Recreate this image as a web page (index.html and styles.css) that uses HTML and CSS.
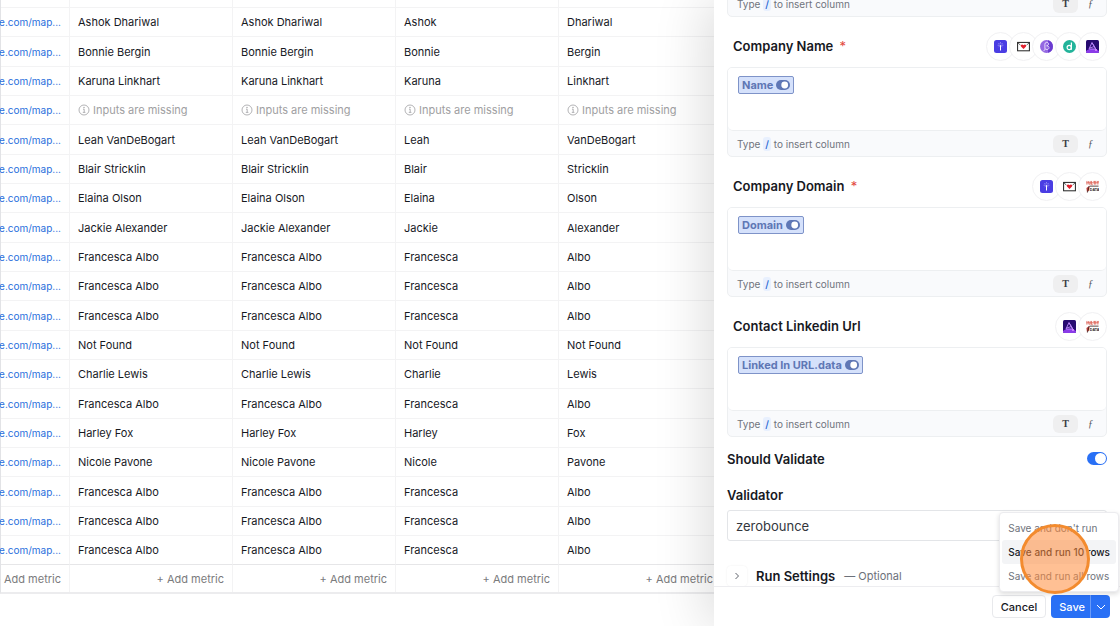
FILE: index.html
```
<!DOCTYPE html>
<html lang="en">
  <head>
    <meta charset="utf-8">
    <title>Column settings</title>
    <link rel="stylesheet" href="styles.css">
  </head>
  <body>
    <svg class="sprite" aria-hidden="true">
      <symbol id="info" viewBox="0 0 12 12">
        <circle cx="6" cy="6" r="5" fill="none" stroke="currentColor" stroke-width="0.8"/>
        <path d="M5 5.2h1.2v3M4.8 8.4h2.6" fill="none" stroke="currentColor" stroke-width="0.8"/>
        <circle cx="6" cy="3.5" r="0.7" fill="currentColor"/>
      </symbol>
      <symbol id="pill" viewBox="0 0 14 10">
        <rect width="14" height="10" rx="5" fill="#5f77b5"/>
        <circle cx="8.7" cy="5" r="3.4" fill="#fff"/>
      </symbol>
      <symbol id="spark" viewBox="0 0 13 13">
        <rect width="13" height="13" rx="2.5" fill="#4a3de3"/>
        <path d="M6.5 5v5.500" stroke="#fff" stroke-width="1"/>
        <path d="M3.600 5.200h5.800M4.400 3l1 1M8.600 3l-1 1M6.500 2v1.600M4.600 7.200l.9-1M8.400 7.200l-.9-1" stroke="#b9b4ff" stroke-width="0.6"/>
      </symbol>
      <symbol id="mail" viewBox="0 0 13 13">
        <rect x="0.6" y="2.4" width="11.8" height="8.400" fill="#fff" stroke="#222" stroke-width="1"/>
        <path d="M1 3l2.400 2M12 3L9.600 5" stroke="#222" stroke-width="0.7"/>
        <path d="M6.500 9L4 6.400C3.200 4.800 5.400 3.800 6.500 5.300c1.100-1.500 3.300-.5 2.500 1.100z" fill="#e0202d"/>
      </symbol>
      <symbol id="beta" viewBox="0 0 13 13">
        <circle cx="6.500" cy="6.500" r="6.500" fill="#9468e2"/>
        <path d="M8 .2a6.500 6.500 0 0 1 0 12.600z" fill="#6a3bd0"/>
        <path d="M3.500 10.700c1 0 1.400-.7 1.400-2V4.300c0-2.800 3.700-2.500 3.700-.4 0 1.200-.9 1.800-1.900 1.900 3.100 0 3 3.700.2 3.700-.8 0-1.300-.3-1.700-.8" fill="none" stroke="#f1e8ff" stroke-width="0.9"/>
      </symbol>
      <symbol id="dropc" viewBox="0 0 13 13">
        <circle cx="6.500" cy="6.500" r="6.500" fill="#22b39a"/>
        <circle cx="6.200" cy="7.500" r="2.100" fill="none" stroke="#fff" stroke-width="1.200"/>
        <path d="M8.400 2.400v7.400" stroke="#fff" stroke-width="1.200"/>
      </symbol>
      <symbol id="nebula" viewBox="0 0 13 13">
        <rect width="13" height="13" rx="1.500" fill="#260a70"/>
        <path d="M0 11c3-3 10-3 13 0v.5a1.500 1.500 0 0 1-1.500 1.500h-10A1.500 1.500 0 0 1 0 11.500z" fill="#8a3be8"/>
        <path d="M6 2.500l-3 6.500h6.500zM6 3l2.500 3.500M3.500 8l5-1.500 1.500 3" fill="none" stroke="#c08aff" stroke-width="0.900"/>
        <circle cx="10" cy="10" r="1.100" fill="#dc8cff"/>
      </symbol>
      <symbol id="sickdata" viewBox="0 0 14 14">
        <path d="M1 1v4M2.500 1.200l1 4M4.500 1v4M6 1v4h1.200M8 1.500h2M9 1.500V5M10.500 1v4M12 1l.8 2L13.500 1M12.800 3v2M.5 3h13" fill="none" stroke="#dd6157" stroke-width="0.900"/>
        <path d="M.5 8.500l3-2v4.500l-2.500 2z" fill="#b83b37"/>
        <path d="M3.500 6.500l-2 7M4 6.600h9.500" stroke="#3a2020" stroke-width="0.900"/>
        <text x="4" y="11.500" class="data-mark">DATA</text>
      </symbol>
    </svg>

    <div class="app">
      <main class="sheet">
        <table class="grid">
          <tbody id="rows"></tbody>
          <tfoot><tr id="metrics"></tr></tfoot>
        </table>
      </main>

      <aside class="panel">
        <form class="panel-body">
          <section class="field">
            <div class="editor">
              <div class="editor-text" role="textbox" aria-label="Input"></div>
              <div class="editor-bar">
                <span>Type <kbd>/</kbd> to insert column</span>
                <button type="button" class="mode active">T</button>
                <button type="button" class="mode fx">ƒ</button>
              </div>
            </div>
          </section>

          <section class="field">
            <header class="field-head">
              <h3 id="company-name">Company Name <span class="required">*</span></h3>
              <div class="sources">
                <span><svg><use href="#spark"/></svg></span>
                <span><svg><use href="#mail"/></svg></span>
                <span><svg><use href="#beta"/></svg></span>
                <span><svg><use href="#dropc"/></svg></span>
                <span><svg><use href="#nebula"/></svg></span>
              </div>
            </header>
            <div class="editor">
              <div class="editor-text" role="textbox" aria-labelledby="company-name"><span class="chip">Name <svg><use href="#pill"/></svg></span></div>
              <div class="editor-bar">
                <span>Type <kbd>/</kbd> to insert column</span>
                <button type="button" class="mode active">T</button>
                <button type="button" class="mode fx">ƒ</button>
              </div>
            </div>
          </section>

          <section class="field">
            <header class="field-head">
              <h3 id="company-domain">Company Domain <span class="required">*</span></h3>
              <div class="sources">
                <span><svg><use href="#spark"/></svg></span>
                <span><svg><use href="#mail"/></svg></span>
                <span><svg><use href="#sickdata"/></svg></span>
              </div>
            </header>
            <div class="editor">
              <div class="editor-text" role="textbox" aria-labelledby="company-domain"><span class="chip">Domain <svg><use href="#pill"/></svg></span></div>
              <div class="editor-bar">
                <span>Type <kbd>/</kbd> to insert column</span>
                <button type="button" class="mode active">T</button>
                <button type="button" class="mode fx">ƒ</button>
              </div>
            </div>
          </section>

          <section class="field">
            <header class="field-head">
              <h3 id="linkedin-url">Contact Linkedin Url</h3>
              <div class="sources">
                <span><svg><use href="#nebula"/></svg></span>
                <span><svg><use href="#sickdata"/></svg></span>
              </div>
            </header>
            <div class="editor">
              <div class="editor-text" role="textbox" aria-labelledby="linkedin-url"><span class="chip">Linked In URL.data <svg><use href="#pill"/></svg></span></div>
              <div class="editor-bar">
                <span>Type <kbd>/</kbd> to insert column</span>
                <button type="button" class="mode active">T</button>
                <button type="button" class="mode fx">ƒ</button>
              </div>
            </div>
          </section>

          <div class="validate">
            <label for="should-validate">Should Validate</label>
            <input type="checkbox" id="should-validate" class="switch" checked>
          </div>

          <label class="select-label" for="validator">Validator</label>
          <select id="validator" class="select">
            <option>zerobounce</option>
          </select>

          <div class="run-settings">
            <button type="button" class="expand" aria-label="Expand run settings">
              <svg viewBox="0 0 8 8"><path d="M2.500 1l3 3-3 3"/></svg>
            </button>
            <h3>Run Settings</h3>
            <span>— Optional</span>
          </div>
        </form>

        <footer class="panel-footer">
          <button type="button" class="cancel">Cancel</button>
          <div class="save-group">
            <button type="button" class="save">Save</button>
            <button type="button" class="save-more" aria-label="More save options">
              <svg viewBox="0 0 10 10"><path d="M1 3l4 4 4-4"/></svg>
            </button>
            <div class="menu">
              <button type="button">Save and don't run</button>
              <button type="button" class="current">Save and run 10 rows</button>
              <button type="button">Save and run all rows</button>
              <span class="click-mark"></span>
            </div>
          </div>
        </footer>
      </aside>
    </div>

    <script src="script.js"></script>
  </body>
</html>
```
FILE: styles.css
```
* {
  box-sizing: border-box;
}
body {
  margin: 0;
  font-family: Inter, "Liberation Sans", sans-serif;
  color: #17191f;
  background-color: #ffffff;
}
button {
  font-family: inherit;
  padding: 0;
  border: 0;
  background: none;
}
h3 {
  margin: 0;
  font-size: 13px;
  font-weight: 600;
}
.sprite {
  display: none;
}
.app {
  display: flex;
  height: 100vh;
  overflow: hidden;
}

/* sheet */
.sheet {
  flex: 1;
  min-width: 0;
  display: flex;
  flex-direction: column;
  justify-content: flex-end;
  padding-bottom: 32px;
  overflow: hidden;
}
.grid {
  width: 722px;
  table-layout: fixed;
  border-collapse: separate;
  border-spacing: 0;
  border-left: 1px solid #e2e3e6;
  border-bottom: 2px solid #ececee;
  font-size: 11px;
}
.grid td {
  height: 29px;
  width: 163px;
  padding: 0 8px;
  border-right: 1px solid #f3f3f4;
  border-bottom: 1px solid #f3f3f4;
  white-space: nowrap;
}
.grid tr:nth-child(3n) td {
  height: 30px;
}
.grid tr:last-child td {
  border-bottom-color: #e6e6e8;
}
.grid td:first-child {
  width: 69px;
  padding-left: 0;
}
.grid a {
  display: flex;
  justify-content: flex-end;
  font-size: 10px;
  color: #2a6fdc;
  text-decoration: none;
}
.grid tfoot td {
  height: 27px;
  border-bottom: 0;
}
.metric {
  display: flex;
  justify-content: flex-end;
  width: 100%;
  font-size: 11px;
  color: #7b7b7d;
}
.missing {
  display: flex;
  align-items: center;
  gap: 3px;
  color: #a0a0a2;
}
.missing svg {
  width: 12px;
  height: 12px;
}

/* panel */
.panel {
  position: relative;
  width: 406px;
  display: flex;
  flex-direction: column;
  background-color: #ffffff;
  box-shadow: -8px 0 50px rgba(0, 0, 0, 0.14);
}
.panel-body {
  flex: 1;
  min-height: 0;
  display: flex;
  flex-direction: column;
  justify-content: flex-end;
  overflow: hidden;
  padding: 0 13px;
}
.panel-body > * {
  flex-shrink: 0;
}
.field-head {
  display: flex;
  align-items: center;
  justify-content: space-between;
  height: 50px;
  padding-top: 8px;
  padding-left: 6px;
}
.required {
  margin-left: 3px;
  font-weight: 400;
  color: #e2483d;
}
.sources {
  display: flex;
}
.sources span {
  display: flex;
  align-items: center;
  justify-content: center;
  width: 29px;
  height: 29px;
  margin-left: -6px;
  border: 1px solid #f1f1f3;
  border-radius: 50%;
  background-color: #ffffff;
}
.sources svg {
  width: 13px;
  height: 13px;
}
.data-mark {
  font: bold 4px "Liberation Sans", sans-serif;
  fill: #2b2424;
}
.editor {
  border: 1px solid #edeff1;
  border-radius: 5px;
  background-color: #f9fafc;
  overflow: hidden;
}
.editor-text {
  display: flex;
  align-items: flex-start;
  height: 63px;
  padding: 8px 10px;
  border-bottom: 1px solid #edeff1;
  border-radius: 0 0 5px 5px;
  background-color: #ffffff;
}
.chip {
  display: flex;
  align-items: center;
  gap: 3px;
  height: 18px;
  padding: 0 3px;
  border: 1px solid #7e93c8;
  border-radius: 2px;
  background-color: #d5e1fb;
  font-size: 11px;
  font-weight: 700;
  color: #5f77b5;
}
.chip svg {
  width: 14px;
  height: 10px;
}
.editor-bar {
  display: flex;
  align-items: center;
  height: 25px;
  padding: 0 3px 0 9px;
  font-size: 10px;
  color: #70747d;
}
.editor-bar > span {
  flex: 1;
}
kbd {
  padding: 1px 2px;
  border-radius: 3px;
  background-color: #e8f0fe;
  font: inherit;
  font-weight: 500;
  color: #2463d2;
}
.mode {
  width: 25px;
  height: 18px;
  border-radius: 6px;
  font: bold 10px "Liberation Serif", serif;
  color: #3a3c42;
}
.mode.active {
  background-color: #efeff0;
}
.mode.fx {
  font-weight: 400;
  font-style: italic;
  color: #55585f;
}
.validate {
  display: flex;
  align-items: center;
  justify-content: space-between;
  height: 43px;
  font-size: 13px;
  font-weight: 600;
}
.switch {
  appearance: none;
  width: 20px;
  height: 13px;
  margin: 0;
  padding: 1px;
  border-radius: 7px;
  background-color: #c9ccd2;
}
.switch::before {
  content: "";
  display: block;
  width: 11px;
  height: 11px;
  border-radius: 50%;
  background-color: #ffffff;
}
.switch:checked {
  background-color: #2970f5;
}
.switch:checked::before {
  margin-left: auto;
}
.select-label {
  height: 30px;
  line-height: 30px;
  font-size: 13px;
  font-weight: 600;
}
.select {
  appearance: none;
  height: 31px;
  padding: 0 8px;
  border: 1px solid #e3e5e8;
  border-radius: 3px;
  background-color: #ffffff;
  font-family: inherit;
  font-size: 13px;
  color: #33363c;
}
.run-settings {
  display: flex;
  align-items: center;
  height: 20px;
  margin-top: 25px;
}
.run-settings span {
  margin-left: 9px;
  font-size: 11px;
  color: #6d717a;
}
.expand {
  display: flex;
  align-items: center;
  justify-content: center;
  width: 20px;
  height: 20px;
  margin-right: 9px;
  border-radius: 4px;
  box-shadow: 0 0 2px rgba(0, 0, 0, 0.08);
}
.expand svg {
  width: 8px;
  height: 8px;
  fill: none;
  stroke: #60646c;
}
.panel-footer {
  display: flex;
  justify-content: flex-end;
  gap: 5px;
  height: 40px;
  padding: 8px 10px;
  border-top: 1px solid #ededf0;
}
.cancel {
  height: 23px;
  padding: 0 8px;
  border: 1px solid #e8e9ec;
  border-radius: 4px;
  font-size: 11px;
  font-weight: 500;
  color: #17191f;
}
.save-group {
  position: relative;
  display: flex;
  height: 23px;
  border-radius: 4px;
  background-color: #2970f5;
}
.save {
  padding: 0 5px 0 8px;
  font-size: 11px;
  font-weight: 500;
  color: #ffffff;
}
.save-more {
  display: flex;
  align-items: center;
  justify-content: center;
  width: 20px;
  border-left: 1px solid #6a9bf8;
}
.save-more svg {
  width: 10px;
  height: 10px;
  fill: none;
  stroke: #ffffff;
}
.menu {
  position: absolute;
  right: -9px;
  bottom: 26px;
  padding: 3px 2px;
  border: 1px solid #ececef;
  border-radius: 4px;
  background-color: #ffffff;
  box-shadow: 0 2px 5px rgba(0, 0, 0, 0.14);
}
.menu button {
  display: block;
  width: 100%;
  height: 24px;
  padding: 0 6px;
  border-radius: 3px;
  font-size: 10px;
  text-align: left;
  white-space: nowrap;
  color: #6f737c;
}
.menu .current {
  background-color: #f3f4f6;
  font-weight: 500;
  color: #17191f;
}
.click-mark {
  position: absolute;
  right: 28px;
  top: 11px;
  width: 70px;
  height: 70px;
  border: 3px solid #f38b2e;
  border-radius: 50%;
  background-color: rgba(255, 140, 60, 0.55);
}
```
FILE: script.js
```
const people = [
  ["", ""],
  ["Ashok", "Dhariwal"],
  ["Bonnie", "Bergin"],
  ["Karuna", "Linkhart"],
  null,
  ["Leah", "VanDeBogart"],
  ["Blair", "Stricklin"],
  ["Elaina", "Olson"],
  ["Jackie", "Alexander"],
  ["Francesca", "Albo"],
  ["Francesca", "Albo"],
  ["Francesca", "Albo"],
  ["Not Found", "Not Found", "Not Found"],
  ["Charlie", "Lewis"],
  ["Francesca", "Albo"],
  ["Harley", "Fox"],
  ["Nicole", "Pavone"],
  ["Francesca", "Albo"],
  ["Francesca", "Albo"],
  ["Francesca", "Albo"]
];

const missing = '<span class="missing"><svg><use href="#info"/></svg>Inputs are missing</span>';
const link = '<a href="#">e.com/map...</a>';

document.getElementById("rows").innerHTML = people.map(function (p) {
  let cells = [missing, missing, missing, missing];
  if (p) {
    let full = p[2] || (p[0] + " " + p[1]).trim();
    cells = [full, full, p[0], p[1]];
  }
  return "<tr><td>" + (p && !p[0] ? "" : link) + "</td>" +
    cells.map(c => "<td>" + c + "</td>").join("") + "</tr>";
}).join("");

document.getElementById("metrics").innerHTML =
  '<td><button type="button" class="metric">+ Add metric</button></td>'.repeat(5);
```
